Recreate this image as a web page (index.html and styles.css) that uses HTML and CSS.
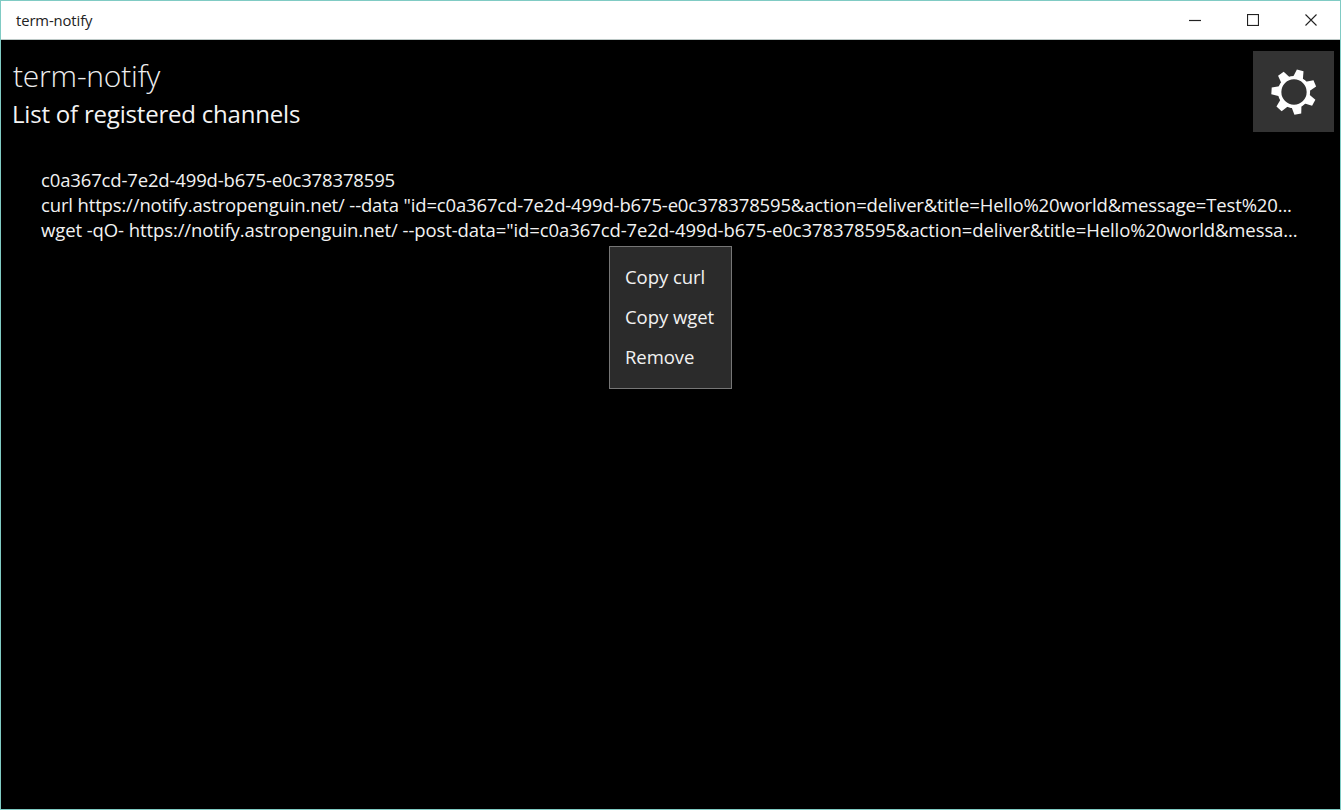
FILE: index.html
```html
<!DOCTYPE html>
<html lang="en">
<head>
<meta charset="utf-8">
<title>term-notify</title>
<link rel="stylesheet" href="styles.css">
</head>
<body>
<div class="window">
  <header class="titlebar">
    <span class="titlebar-name">term-notify</span>
    <div class="caption">
      <button class="caption-btn"><svg width="12" height="12" viewBox="0 0 12 12"><path d="M0 6.5H12" stroke="#222" stroke-width="1.2" fill="none"/></svg></button>
      <button class="caption-btn"><svg width="12" height="12" viewBox="0 0 12 12"><rect x="0.5" y="0.5" width="11" height="11" stroke="#222" stroke-width="1.2" fill="none"/></svg></button>
      <button class="caption-btn"><svg width="12" height="12" viewBox="0 0 12 12"><path d="M0.5 0.5L11.5 11.5M11.5 0.5L0.5 11.5" stroke="#222" stroke-width="1.1" fill="none"/></svg></button>
    </div>
  </header>
  <main class="content">
    <div class="head">
      <div>
        <h1 class="app-title">term-notify</h1>
        <h2 class="subtitle">List of registered channels</h2>
      </div>
      <button class="settings" aria-label="Settings">
        <svg width="46" height="46" viewBox="-24 -24 48 48">
          <g fill="#fff">
            <polygon points="-3.6,-23.5 3.6,-23.5 5.5,-14 -5.5,-14" transform="rotate(16)"/>
            <polygon points="-3.6,-23.5 3.6,-23.5 5.5,-14 -5.5,-14" transform="rotate(67.4)"/>
            <polygon points="-3.6,-23.5 3.6,-23.5 5.5,-14 -5.5,-14" transform="rotate(118.8)"/>
            <polygon points="-3.6,-23.5 3.6,-23.5 5.5,-14 -5.5,-14" transform="rotate(170.2)"/>
            <polygon points="-3.6,-23.5 3.6,-23.5 5.5,-14 -5.5,-14" transform="rotate(221.6)"/>
            <polygon points="-3.6,-23.5 3.6,-23.5 5.5,-14 -5.5,-14" transform="rotate(273)"/>
            <polygon points="-3.6,-23.5 3.6,-23.5 5.5,-14 -5.5,-14" transform="rotate(324.4)"/>
          </g>
          <circle r="15" fill="#333" stroke="#fff" stroke-width="3.6"/>
        </svg>
      </button>
    </div>
    <section class="channel">
      <div class="line">c0a367cd-7e2d-499d-b675-e0c378378595</div>
      <div class="line">curl https://notify.astropenguin.net/ --data "id=c0a367cd-7e2d-499d-b675-e0c378378595&amp;action=deliver&amp;title=Hello%20world&amp;message=Test%20...</div>
      <div class="line line-wide">wget -qO- https://notify.astropenguin.net/ --post-data="id=c0a367cd-7e2d-499d-b675-e0c378378595&amp;action=deliver&amp;title=Hello%20world&amp;messa...</div>
    </section>
    <div class="menu">
      <div class="menu-item">Copy curl</div>
      <div class="menu-item">Copy wget</div>
      <div class="menu-item">Remove</div>
    </div>
  </main>
</div>
</body>
</html>
```

FILE: styles.css
```css
* { box-sizing: border-box; }
html, body { margin: 0; height: 100%; }
body { font-family: "Open Sans", "Noto Sans", sans-serif; overflow: hidden; }
.window {
  height: 810px;
  border: 1px solid #80cbc4;
  display: flex;
  flex-direction: column;
  background: #000;
}
.titlebar {
  height: 39px;
  background: #fff;
  display: flex;
  align-items: center;
  justify-content: space-between;
  border-bottom: 1px solid #bcc8c6;
}
.titlebar-name { font-size: 14.8px; color: #222; margin-left: 15px; letter-spacing: -0.1px; }
.caption { display: flex; }
.caption-btn {
  width: 58px;
  height: 38px;
  border: 0;
  padding: 0;
  background: none;
  display: flex;
  align-items: center;
  justify-content: center;
}
.content { position: relative; flex: 1; color: #fff; }
.head { display: flex; justify-content: space-between; padding: 11px 6px 0 11px; }
.app-title { margin: 0; font-size: 30px; font-weight: 300; line-height: 50px; height: 48px; color: #eee; padding-left: 1px; letter-spacing: -0.2px; }
.subtitle { margin: 0; font-size: 24px; font-weight: 400; line-height: 30px; letter-spacing: -0.2px; color: #f4f4f4; }
.settings {
  width: 81px;
  height: 81px;
  border: 0;
  padding: 0;
  background: #333;
  display: flex;
  align-items: center;
  justify-content: center;
}
.channel { margin: 35px 0 0 40px; }
.line {
  font-size: 18.5px;
  line-height: 25px;
  letter-spacing: -0.15px;
  color: #f2f2f2;
  white-space: nowrap;
}
.line-wide { letter-spacing: -0.09px; }
.menu {
  position: absolute;
  left: 608px;
  top: 206px;
  width: 123px;
  height: 143px;
  padding: 10px 0;
  background: #2b2b2b;
  border: 1px solid #767676;
}
.menu-item { height: 40px; line-height: 40px; padding-left: 15px; font-size: 18.5px; letter-spacing: -0.05px; color: #f2f2f2; }
```
